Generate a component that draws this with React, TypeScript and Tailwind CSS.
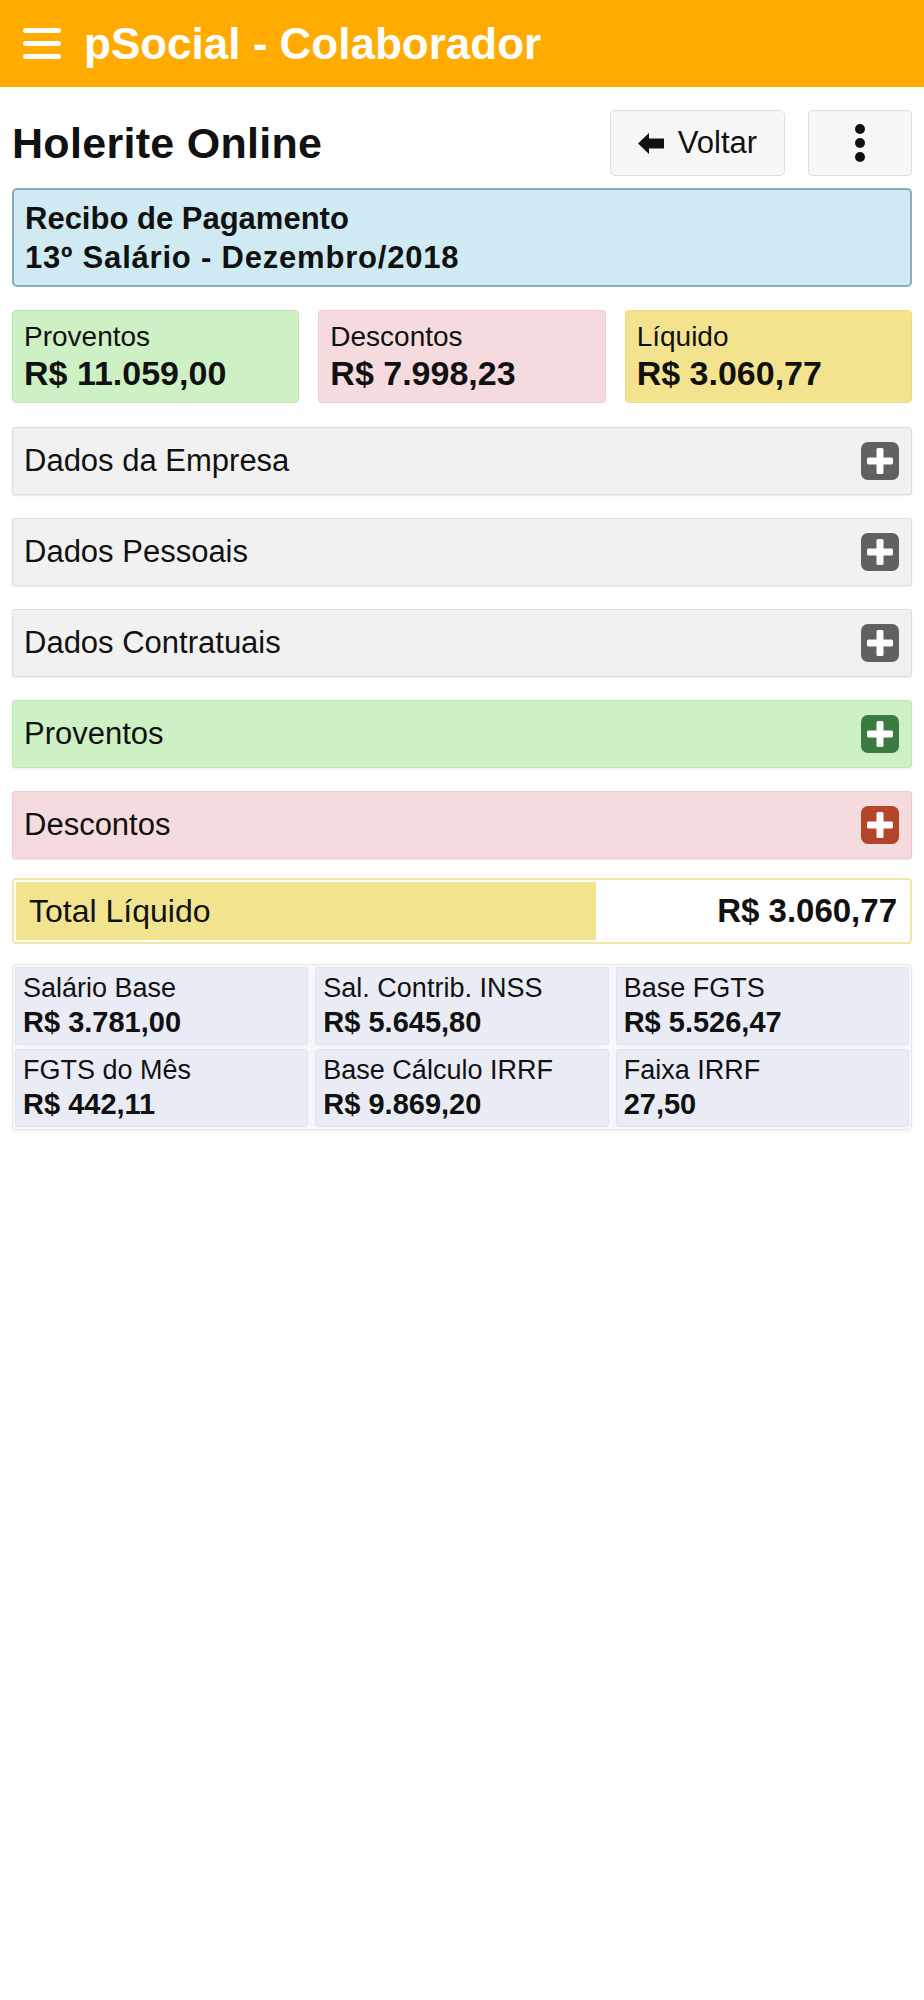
import React from 'react';

type Tone = 'gray' | 'green' | 'red';

const sections: { title: string; tone: Tone }[] = [
  { title: 'Dados da Empresa', tone: 'gray' },
  { title: 'Dados Pessoais', tone: 'gray' },
  { title: 'Dados Contratuais', tone: 'gray' },
  { title: 'Proventos', tone: 'green' },
  { title: 'Descontos', tone: 'red' },
];

const toneRow: Record<Tone, string> = {
  gray: 'bg-[#f1f1f1] border-[#dcdcdc]',
  green: 'bg-[#cdf1c5] border-[#bfe6b6]',
  red: 'bg-[#f5dbdd] border-[#eccbce]',
};

const toneIcon: Record<Tone, string> = {
  gray: 'bg-[#616161]',
  green: 'bg-[#3b7b3f]',
  red: 'bg-[#b3462a]',
};

const bases = [
  { label: 'Salário Base', value: 'R$ 3.781,00' },
  { label: 'Sal. Contrib. INSS', value: 'R$ 5.645,80' },
  { label: 'Base FGTS', value: 'R$ 5.526,47' },
  { label: 'FGTS do Mês', value: 'R$ 442,11' },
  { label: 'Base Cálculo IRRF', value: 'R$ 9.869,20' },
  { label: 'Faixa IRRF', value: '27,50' },
];

const PlusIcon: React.FC<{ tone: Tone }> = ({ tone }) => (
  <div className={`w-[38px] h-[38px] rounded-[7px] flex items-center justify-center ${toneIcon[tone]}`}>
    <svg width="26" height="26" viewBox="0 0 26 26">
      <rect x="9.5" y="0" width="7" height="26" rx="1.5" fill="#fff" />
      <rect x="0" y="9.5" width="26" height="7" rx="1.5" fill="#fff" />
    </svg>
  </div>
);

const App: React.FC = () => {
  return (
    <div className="min-h-screen w-full bg-white text-[#111] font-['Liberation_Sans',Arial,sans-serif]">
      {/* top bar */}
      <header className="h-[87px] bg-[#ffab00] flex items-center px-[23px] gap-[23px]">
        <div className="flex flex-col gap-[8px] w-[38px]">
          <span className="block h-[5px] bg-white rounded-sm" />
          <span className="block h-[5px] bg-white rounded-sm" />
          <span className="block h-[5px] bg-white rounded-sm" />
        </div>
        <h1 className="text-white font-bold text-[44px] leading-none">pSocial - Colaborador</h1>
      </header>

      <main className="px-3">
        {/* title row */}
        <div className="flex items-center justify-between pt-[23px] pb-[12px]">
          <h2 className="font-bold text-[43px] leading-none tracking-[0.3px]">Holerite Online</h2>
          <div className="flex gap-[23px]">
            <button className="w-[175px] h-[66px] rounded-[5px] bg-[#f7f7f7] border border-[#dedede] flex items-center justify-center gap-[14px] text-[31px]">
              <svg width="26" height="21" viewBox="0 0 26 21">
                <path d="M0 10.5 L11 0 L11 5.5 L26 5.5 L26 15.5 L11 15.5 L11 21 Z" fill="#111" />
              </svg>
              Voltar
            </button>
            <button className="w-[104px] h-[66px] rounded-[5px] bg-[#f7f7f7] border border-[#dedede] flex flex-col items-center justify-center gap-[4px]">
              <span className="block w-[10px] h-[10px] rounded-full bg-[#111]" />
              <span className="block w-[10px] h-[10px] rounded-full bg-[#111]" />
              <span className="block w-[10px] h-[10px] rounded-full bg-[#111]" />
            </button>
          </div>
        </div>

        {/* recibo */}
        <div className="h-[99px] rounded-[5px] bg-[#d0eaf3] border-2 border-[#86aebe] px-[11px] flex flex-col justify-center gap-[8px] font-bold text-[31px] leading-none">
          <div>Recibo de Pagamento</div>
          <div className="tracking-[0.8px]">13º Salário - Dezembro/2018</div>
        </div>

        {/* resumo */}
        <div className="grid grid-cols-3 gap-[19px] mt-[23px]">
          <div className="h-[93px] rounded-[4px] bg-[#cdf1c5] border border-[#bde4b3] px-[11px] flex flex-col justify-center gap-[5px]">
            <div className="text-[28px] leading-none">Proventos</div>
            <div className="text-[34px] font-bold leading-none">R$ 11.059,00</div>
          </div>
          <div className="h-[93px] rounded-[4px] bg-[#f5dbdd] border border-[#eccacd] px-[11px] flex flex-col justify-center gap-[5px]">
            <div className="text-[28px] leading-none">Descontos</div>
            <div className="text-[34px] font-bold leading-none">R$ 7.998,23</div>
          </div>
          <div className="h-[93px] rounded-[4px] bg-[#f3e38f] border border-[#eadb88] px-[11px] flex flex-col justify-center gap-[5px]">
            <div className="text-[28px] leading-none">Líquido</div>
            <div className="text-[34px] font-bold leading-none">R$ 3.060,77</div>
          </div>
        </div>

        {/* secoes */}
        <div className="flex flex-col gap-[23px] mt-[24px]">
          {sections.map((s) => (
            <div
              key={s.title}
              className={`h-[68px] rounded-[3px] border shadow-[0_1px_2px_rgba(0,0,0,0.08)] flex items-center justify-between pl-[11px] pr-[12px] ${toneRow[s.tone]}`}
            >
              <span className="text-[31px] leading-none pb-[2px]">{s.title}</span>
              <PlusIcon tone={s.tone} />
            </div>
          ))}
        </div>

        {/* total liquido */}
        <div className="mt-[19px] h-[66px] rounded-[4px] border-2 border-[#f0e7a8] bg-white p-[2px] flex">
          <div className="w-[65%] bg-[#f2e48f] flex items-center pl-[13px] text-[32px]">Total Líquido</div>
          <div className="flex-1 flex items-center justify-end pr-[11px] text-[33px] font-bold">R$ 3.060,77</div>
        </div>

        {/* bases */}
        <div className="mt-[20px] rounded-[4px] bg-[#f6f7fa] border border-[#e6e8ee] p-[2px] grid grid-cols-3 gap-x-[7px] gap-y-[4px] shadow-[0_2px_3px_rgba(0,0,0,0.05)]">
          {bases.map((b) => (
            <div key={b.label} className="h-[78px] rounded-[3px] bg-[#e9ecf4] border border-[#e1e4ec] px-[7px] flex flex-col justify-center gap-[6px]">
              <div className="text-[27px] leading-none">{b.label}</div>
              <div className="text-[29px] font-bold leading-none">{b.value}</div>
            </div>
          ))}
        </div>
      </main>
    </div>
  );
};

export default App;
